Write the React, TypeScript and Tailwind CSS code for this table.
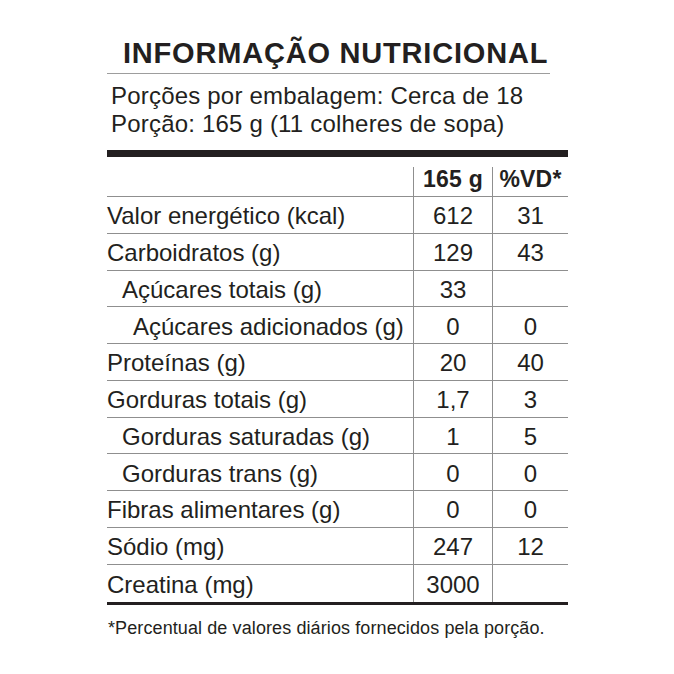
const rows = [
  { label: "Valor energético (kcal)", qty: "612", vd: "31", indent: 0 },
  { label: "Carboidratos (g)", qty: "129", vd: "43", indent: 0 },
  { label: "Açúcares totais (g)", qty: "33", vd: "", indent: 1 },
  { label: "Açúcares adicionados (g)", qty: "0", vd: "0", indent: 2 },
  { label: "Proteínas (g)", qty: "20", vd: "40", indent: 0 },
  { label: "Gorduras totais (g)", qty: "1,7", vd: "3", indent: 0 },
  { label: "Gorduras saturadas (g)", qty: "1", vd: "5", indent: 1 },
  { label: "Gorduras trans (g)", qty: "0", vd: "0", indent: 1 },
  { label: "Fibras alimentares (g)", qty: "0", vd: "0", indent: 0 },
  { label: "Sódio (mg)", qty: "247", vd: "12", indent: 0 },
  { label: "Creatina (mg)", qty: "3000", vd: "", indent: 0 },
];

const indentClass = ["pl-0", "pl-[15px]", "pl-[26px]"];

export default function App() {
  return (
    <div className="min-h-screen bg-white font-['Liberation_Sans',Arial,sans-serif] text-[#231f20]">
      <div className="ml-[107px] w-[461px] pt-[39px]">
        <div className="w-[443px] border-b border-[#9d9d9d] pb-[6px] pl-[16px]">
          <h1 className="text-[29px] leading-[28px] font-bold tracking-[0.8px]">INFORMAÇÃO NUTRICIONAL</h1>
        </div>

        <div className="mt-[8px] pl-[4px] text-[24px] leading-[28px] tracking-[0.2px]">
          <div>Porções por embalagem: Cerca de 18</div>
          <div>Porção: 165 g (11 colheres de sopa)</div>
        </div>

        <div className="mt-[12px] h-[7px] bg-[#231f20]" />

        <div className="mt-[10px]">
          <div className="grid h-[30px] grid-cols-[306px_79px_76px] border-b border-[#8f8f8f] text-[23px] leading-[22px] font-bold tracking-[0.2px]">
            <div />
            <div className="flex justify-center border-l border-[#8f8f8f] pt-[1px]">165 g</div>
            <div className="flex justify-center border-l border-[#8f8f8f] pt-[1px]">%VD*</div>
          </div>

          {rows.map((r, i) => {
            const last = i === rows.length - 1;
            return (
              <div
                key={r.label}
                className={
                  "grid grid-cols-[306px_79px_76px] text-[24px] leading-[23px] " +
                  (last ? "h-[40.5px] border-b-[3px] border-[#231f20]" : "h-[36.75px] border-b border-[#8f8f8f]")
                }
              >
                <div className={"flex items-center whitespace-nowrap pt-[2px] " + indentClass[r.indent]}>{r.label}</div>
                <div className="flex items-center justify-center border-l border-[#8f8f8f] pt-[2px]">{r.qty}</div>
                <div className="flex items-center justify-center border-l border-[#8f8f8f] pt-[2px]">{r.vd}</div>
              </div>
            );
          })}
        </div>

        <p className="mt-[15px] pl-[1px] text-[18px] leading-[17px] tracking-[0.1px]">
          *Percentual de valores diários fornecidos pela porção.
        </p>
      </div>
    </div>
  );
}
